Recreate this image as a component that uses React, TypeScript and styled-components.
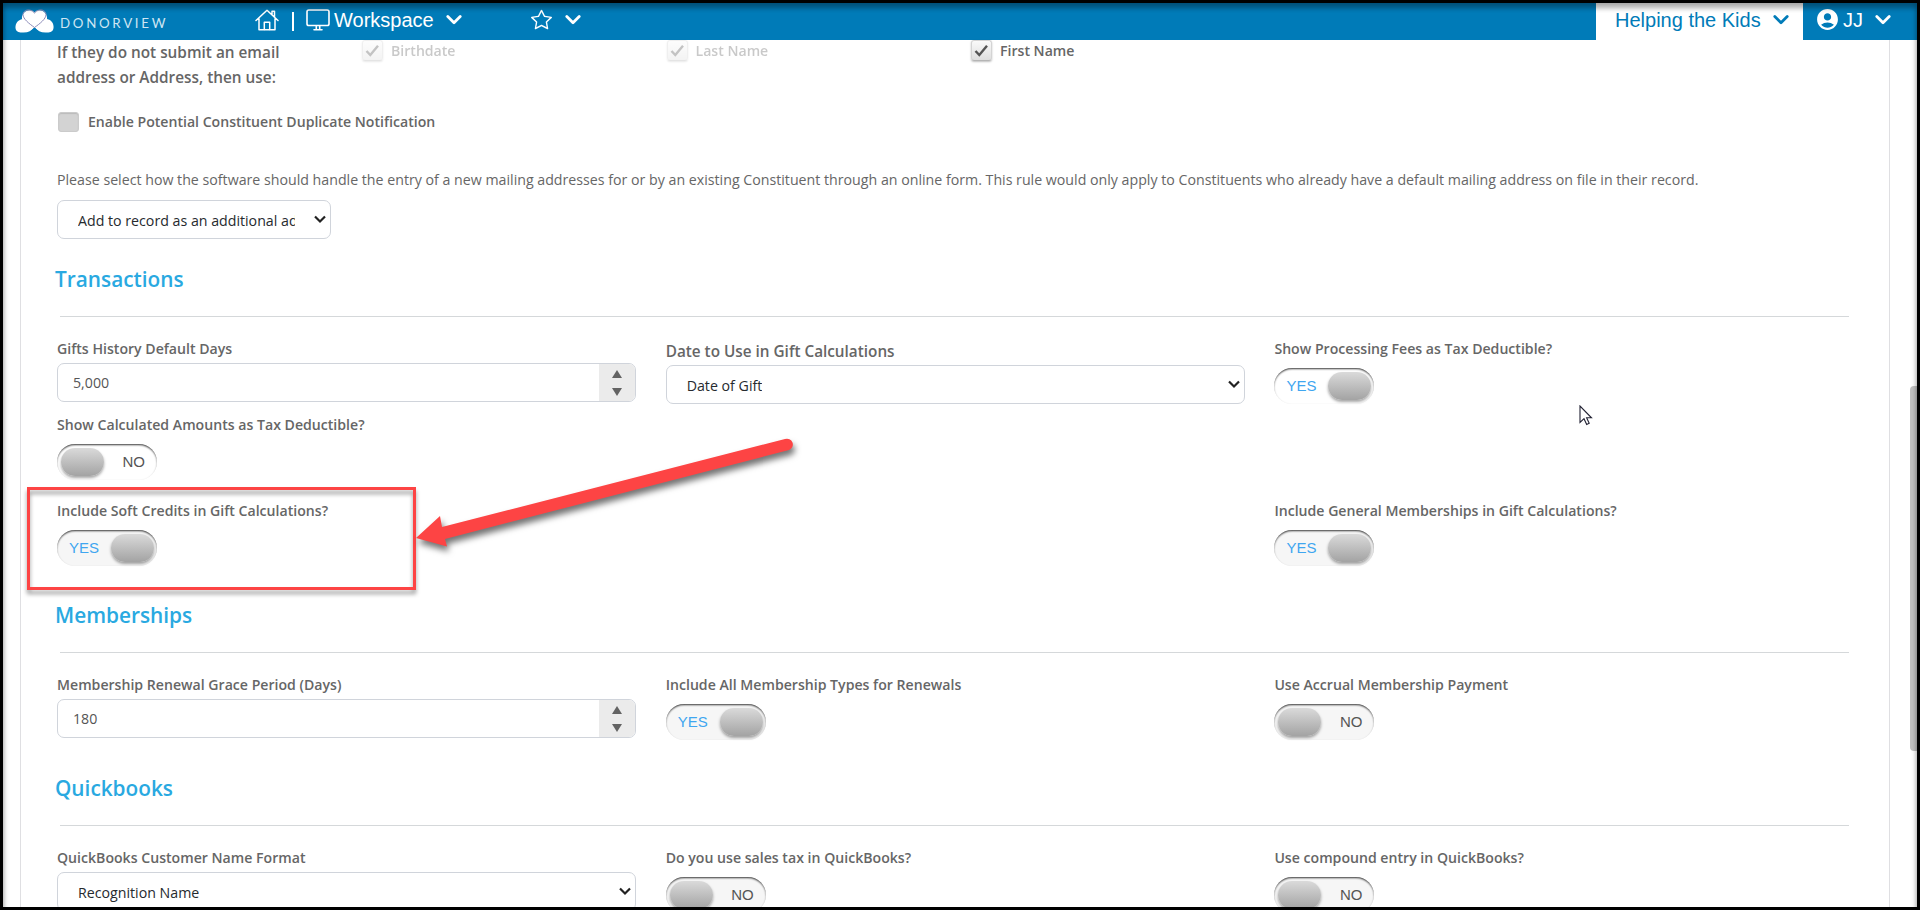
import React from "react";
import styled, { createGlobalStyle } from "styled-components";
import { BsStar } from "react-icons/bs";
import { MdAccountCircle } from "react-icons/md";

const GlobalStyle = createGlobalStyle`
  *, *::before, *::after { box-sizing: border-box; }
  body {
    margin: 0;
    background: #000;
    overflow: hidden;
    font-family: "Open Sans", "Noto Sans", sans-serif;
    font-size: 14.2px;
    color: #666;
  }
`;

const Frame = styled.div`
  position: relative;
  width: 1920px;
  height: 910px;
  border: 3px solid #000;
  background: #fff;
  overflow: hidden;
  display: flex;
  flex-direction: column;
`;

const EdgeShade = styled.div`
  position: absolute;
  inset: 0 0 -12px 0;
  pointer-events: none;
  box-shadow: inset 0 6px 4px rgba(0, 0, 0, 0.24), inset 0 0 6px rgba(0, 0, 0, 0.3);
`;

const TopBar = styled.header`
  flex: none;
  height: 37px;
  display: flex;
  align-items: stretch;
  background: #007bb8;
  color: #fff;
  font-family: "Liberation Sans", Arial, sans-serif;
  font-size: 20px;
`;

const Brand = styled.div`
  display: flex;
  align-items: center;
  width: 252px;
  padding: 0 0 2px 12px;
`;

const BrandName = styled.span`
  margin: 4px 0 0 6px;
  font-family: Lato, sans-serif;
  font-size: 13.3px;
  letter-spacing: 2.7px;
  color: #cfe6f3;
`;

const NavGroup = styled.div<{ $gap?: number; $left?: number }>`
  display: flex;
  align-items: center;
  gap: ${(p) => p.$gap ?? 12}px;
  margin-left: ${(p) => p.$left ?? 0}px;
  padding-bottom: 4px;
  svg { flex: none; }
`;

const NavText = styled.span`
  margin-top: 1px;
  line-height: 24px;
  white-space: nowrap;
`;

const Initials = styled(NavText)`
  margin-right: 9px;
`;

const Divider = styled.i`
  width: 2px;
  height: 19px;
  margin: 4px 12px 0 13px;
  background: #fff;
`;

const OrgTab = styled(NavGroup)`
  width: 207px;
  margin-left: auto;
  padding-left: 19px;
  background: #fff;
  color: #007bb8;
`;

const UserMenu = styled(NavGroup)`
  width: 114px;
  padding-left: 12px;
`;

const Page = styled.main`
  flex: 1;
  display: flex;
  min-height: 0;
`;

const Card = styled.div`
  width: 1870px;
  margin-left: 17px;
  padding: 0 39px 0 36px;
  border: solid #dfdfe2;
  border-width: 0 1px;
`;

const ScrollTrack = styled.div`
  width: 7px;
  margin: 346px 0 0 20px;
`;

const ScrollThumb = styled.div`
  height: 365px;
  border-radius: 4px 0 0 4px;
  background: #c1c1c1;
`;

const MatchRules = styled.section`
  padding-bottom: 25px;
`;

const MatchRow = styled.div`
  display: grid;
  grid-template-columns: 305px 304.5px 304.5px 304.5px;
  height: 71px;
`;

const MatchText = styled.div`
  width: 240px;
  font-size: 15.35px;
  font-weight: 600;
  line-height: 25px;
  white-space: nowrap;
`;

const CheckItem = styled.div<{ $disabled?: boolean; $inset?: number }>`
  display: flex;
  align-items: center;
  gap: ${(p) => (p.$inset ? 9 : 8)}px;
  height: 21px;
  padding-left: ${(p) => p.$inset ?? 0}px;
  font-size: 14.1px;
  font-weight: 600;
  opacity: ${(p) => (p.$disabled ? 0.35 : 1)};
`;

const CheckBox = styled.span<{ $filled?: boolean }>`
  display: flex;
  align-items: center;
  justify-content: center;
  width: 21px;
  height: ${(p) => (p.$filled ? 20 : 21)}px;
  border-radius: 3px;
  border: 1px solid ${(p) => (p.$filled ? "#cbcbcb" : "#d4d4d4")};
  border-bottom-color: ${(p) => (p.$filled ? "#cbcbcb" : "#b5b5b5")};
  background: ${(p) => (p.$filled ? "#d3d3d3" : "linear-gradient(#fafafa, #dedede)")};
  box-shadow: ${(p) => (p.$filled ? "inset 0 1px 1px #bbb" : "0 1px 2px rgba(0,0,0,.25)")};
`;

const RuleText = styled.p`
  margin: 38px 0 10px;
  line-height: 20px;
  white-space: nowrap;
`;

const SelectBox = styled.div<{ $width?: number }>`
  display: flex;
  align-items: center;
  justify-content: space-between;
  width: ${(p) => (p.$width ? p.$width + "px" : "100%")};
  height: 39px;
  padding: 1px 4px 0 20px;
  border: 1px solid #d0d4db;
  border-radius: 7px;
  color: #262a2e;
  svg { flex: none; margin-top: -2px; }
`;

const SelectValue = styled.span`
  overflow: hidden;
  white-space: nowrap;
  max-width: calc(100% - 31px);
`;

const SectionTitle = styled.h2`
  margin: 0 0 22px -2px;
  font-size: 20.8px;
  font-weight: 600;
  line-height: 30px;
  color: #29a9e1;
`;

const Rule = styled.hr`
  width: 1789px;
  height: 1px;
  margin: 0 0 0 3px;
  border: 0;
  background: #d5d8da;
`;

const FieldGrid = styled.div<{ $rows: string }>`
  display: grid;
  grid-template-columns: repeat(3, 579px);
  column-gap: 29.7px;
  grid-template-rows: ${(p) => p.$rows};
  padding-top: 22px;
`;

const FieldCell = styled.div<{ $column?: number; $drop?: number }>`
  grid-column: ${(p) => p.$column ?? "auto"};
  padding-top: ${(p) => p.$drop ?? 0}px;
`;

const FieldLabel = styled.div<{ $large?: boolean }>`
  font-weight: 600;
  font-size: ${(p) => (p.$large ? 15.3 : 14.12)}px;
  line-height: 20px;
  margin-bottom: 4px;
  white-space: nowrap;
`;

const NumberBox = styled.div`
  display: flex;
  height: 39px;
  border: 1px solid #d0d4db;
  border-radius: 7px;
  overflow: hidden;
`;

const NumberValue = styled.span`
  flex: 1;
  padding-left: 15px;
  line-height: 38px;
  color: #555;
`;

const Spinner = styled.span`
  display: flex;
  flex-direction: column;
  align-items: center;
  justify-content: space-between;
  width: 36px;
  padding: 6px 0 5px;
  background: #ebebeb;
`;

const ToggleTrack = styled.div<{ $on: boolean; $plain?: boolean }>`
  display: flex;
  flex-direction: ${(p) => (p.$on ? "row" : "row-reverse")};
  justify-content: space-between;
  width: 100px;
  height: 36px;
  margin-top: 9px;
  padding: ${(p) => (p.$on ? "4px 3px 4px 12px" : "4px 12px 4px 4px")};
  border-radius: 18px;
  background: ${(p) => (p.$plain ? "#fff" : "#f6f6f6")};
  box-shadow: inset 0 2px 2px -1px rgba(0, 0, 0, 0.6), inset 0 1px 2px rgba(0, 0, 0, 0.3);
  font: 15px/28px "Liberation Sans", Arial, sans-serif;
  color: ${(p) => (p.$on ? "#3fa6f0" : "#555")};
`;

const Knob = styled.span`
  width: 43px;
  height: 28px;
  border-radius: 14px;
  background: linear-gradient(#dadada, #a3a3a3);
  box-shadow: 0 2px 3px rgba(0, 0, 0, 0.35);
`;

const Highlight = styled.div`
  position: absolute;
  left: 24px;
  top: 484px;
  width: 389px;
  height: 103px;
  border: 3px solid #fd4444;
  filter: drop-shadow(0 4px 2px rgba(0, 0, 0, 0.4));
`;

const Arrow = styled.svg`
  position: absolute;
  left: 402px;
  top: 427px;
  filter: drop-shadow(2px 5px 3px rgba(0, 0, 0, 0.55));
`;

const Pointer = styled.svg`
  position: absolute;
  left: 1576px;
  top: 402px;
`;

const NavChevron = () => (
  <svg width="16" height="11" viewBox="0 0 16 11" fill="none" stroke="currentColor" strokeWidth="2.8" strokeLinecap="round" strokeLinejoin="round">
    <path d="M1.8 2.500l6.200 6.200L14.200 2.500" />
  </svg>
);

const SelectChevron = () => (
  <svg width="12" height="9" viewBox="0 0 12 9" fill="none" stroke="#222" strokeWidth="2.2">
    <path d="M1 1.5l5 5 5-5" />
  </svg>
);

const Logo = () => (
  <svg width="39" height="24" viewBox="0 0 39 24">
    <path fill="#fff" d="M7 10C6 3 15-2 19.5 3.500C24-2 33 3 32 10c5 1 7 5 6.500 9c-.5 4-4 5-8 4.500c-5 0-8-2-11-5c-3 3-6 5-11 5c-4 .5-7.500-.5-8-4.500c-.3-4 2-8 7-9z" />
    <path fill="#007bb8" d="M13.500 24l6-5.500 6 5.500z" />
    <path fill="none" stroke="#8b8bb8" strokeWidth="1" d="M19.500 18.500C14 14.500 8 10 8 5.500C8 1 15-1.500 19.500 4C24-1.500 31 1 31 5.500c0 4.500-6 9-11.500 13" />
  </svg>
);

const HomeIcon = () => (
  <svg width="24" height="22" viewBox="0 0 24 22" fill="none" stroke="#fff" strokeWidth="1.5" strokeLinejoin="round" strokeLinecap="round">
    <path d="M1 11.500L12 1.200l11 10.300M4 9.500v11.300h16V9.500M17 5.500V2.200h2.500v6" />
    <path d="M9.300 20.500v-7.300h5.400v7.300" />
  </svg>
);

const MonitorIcon = () => (
  <svg width="24" height="22" viewBox="0 0 24 22" fill="none" stroke="#fff" strokeWidth="1.6" strokeLinecap="round">
    <rect x="1" y="1" width="22" height="15.500" rx="1.800" />
    <path d="M10.300 17v3M13.700 17v3M8 20.700h8" />
  </svg>
);

const Tick = () => (
  <svg width="15" height="14" viewBox="0 0 15 14" fill="none" stroke="#555" strokeWidth="2.400">
    <path d="M1.500 7l3.800 4L13 1.800" />
  </svg>
);

const Select = ({ value, width }: { value: string; width?: number }) => (
  <SelectBox $width={width}>
    <SelectValue>{value}</SelectValue>
    <SelectChevron />
  </SelectBox>
);

const NumberField = ({ value }: { value: string }) => (
  <NumberBox>
    <NumberValue>{value}</NumberValue>
    <Spinner>
      <svg width="10" height="8"><path d="M5 0l5 8H0z" fill="#636363" /></svg>
      <svg width="10" height="8"><path d="M5 8l5-8H0z" fill="#636363" /></svg>
    </Spinner>
  </NumberBox>
);

const Toggle = ({ on = false, plain }: { on?: boolean; plain?: boolean }) => (
  <ToggleTrack $on={on} $plain={plain}>
    <span>{on ? "YES" : "NO"}</span>
    <Knob />
  </ToggleTrack>
);

type FieldProps = { label: string; column?: number; drop?: number; large?: boolean; children: React.ReactNode };

const Field = ({ label, column, drop, large, children }: FieldProps) => (
  <FieldCell $column={column} $drop={drop}>
    <FieldLabel $large={large}>{label}</FieldLabel>
    {children}
  </FieldCell>
);

export default function App() {
  return (
    <>
      <GlobalStyle />
      <Frame>
        <TopBar>
          <Brand>
            <Logo />
            <BrandName>DONORVIEW</BrandName>
          </Brand>
          <NavGroup $gap={0}>
            <HomeIcon />
            <Divider />
            <MonitorIcon />
          </NavGroup>
          <NavGroup $left={4}>
            <NavText>Workspace</NavText>
            <NavChevron />
          </NavGroup>
          <NavGroup $left={69} $gap={13}>
            <BsStar size={21} />
            <NavChevron />
          </NavGroup>
          <OrgTab>
            <NavText>Helping the Kids</NavText>
            <NavChevron />
          </OrgTab>
          <UserMenu $gap={3}>
            <MdAccountCircle size={25} />
            <Initials>JJ</Initials>
            <NavChevron />
          </UserMenu>
        </TopBar>

        <Page>
          <Card>
            <MatchRules>
              <MatchRow>
                <MatchText>If they do not submit an email<br />address or Address, then use:</MatchText>
                <CheckItem $disabled><CheckBox><Tick /></CheckBox>Birthdate</CheckItem>
                <CheckItem $disabled><CheckBox><Tick /></CheckBox>Last Name</CheckItem>
                <CheckItem><CheckBox><Tick /></CheckBox>First Name</CheckItem>
              </MatchRow>
              <CheckItem $inset={1}>
                <CheckBox $filled />
                Enable Potential Constituent Duplicate Notification
              </CheckItem>
              <RuleText>
                Please select how the software should handle the entry of a new mailing addresses for or by an existing Constituent through an online form. This rule would only apply to Constituents who already have a default mailing address on file in their record.
              </RuleText>
              <Select width={274} value="Add to record as an additional address" />
            </MatchRules>

            <SectionTitle>Transactions</SectionTitle>
            <Rule />
            <FieldGrid $rows="76px 86px 99px">
              <Field label="Gifts History Default Days"><NumberField value="5,000" /></Field>
              <Field label="Date to Use in Gift Calculations" large drop={2}><Select value="Date of Gift" /></Field>
              <Field label="Show Processing Fees as Tax Deductible?"><Toggle on plain /></Field>
              <Field label="Show Calculated Amounts as Tax Deductible?" column={1}><Toggle plain /></Field>
              <Field label="Include Soft Credits in Gift Calculations?" column={1}><Toggle on /></Field>
              <Field label="Include General Memberships in Gift Calculations?" column={3}><Toggle on /></Field>
            </FieldGrid>

            <SectionTitle>Memberships</SectionTitle>
            <Rule />
            <FieldGrid $rows="98px">
              <Field label="Membership Renewal Grace Period (Days)"><NumberField value="180" /></Field>
              <Field label="Include All Membership Types for Renewals"><Toggle on /></Field>
              <Field label="Use Accrual Membership Payment"><Toggle /></Field>
            </FieldGrid>

            <SectionTitle>Quickbooks</SectionTitle>
            <Rule />
            <FieldGrid $rows="98px">
              <Field label="QuickBooks Customer Name Format"><Select value="Recognition Name" /></Field>
              <Field label="Do you use sales tax in QuickBooks?"><Toggle /></Field>
              <Field label="Use compound entry in QuickBooks?"><Toggle /></Field>
            </FieldGrid>
          </Card>
          <ScrollTrack><ScrollThumb /></ScrollTrack>
        </Page>

        <Highlight />
        <Arrow width="400" height="130" viewBox="0 0 400 130" fill="#fd4444">
          <path d="M11 108L35 86l2 11L380 9a5.500 5.500 0 0 1 4 11L40 109l2 7.500z" />
        </Arrow>
        <Pointer width="14" height="21" viewBox="0 0 14 21">
          <path d="M1 1v16.500l4-3.800 2.700 5.800 2.500-1.200-2.600-5.500H12.500z" fill="#fff" stroke="#223" strokeWidth="1.100" />
        </Pointer>
        <EdgeShade />
      </Frame>
    </>
  );
}
